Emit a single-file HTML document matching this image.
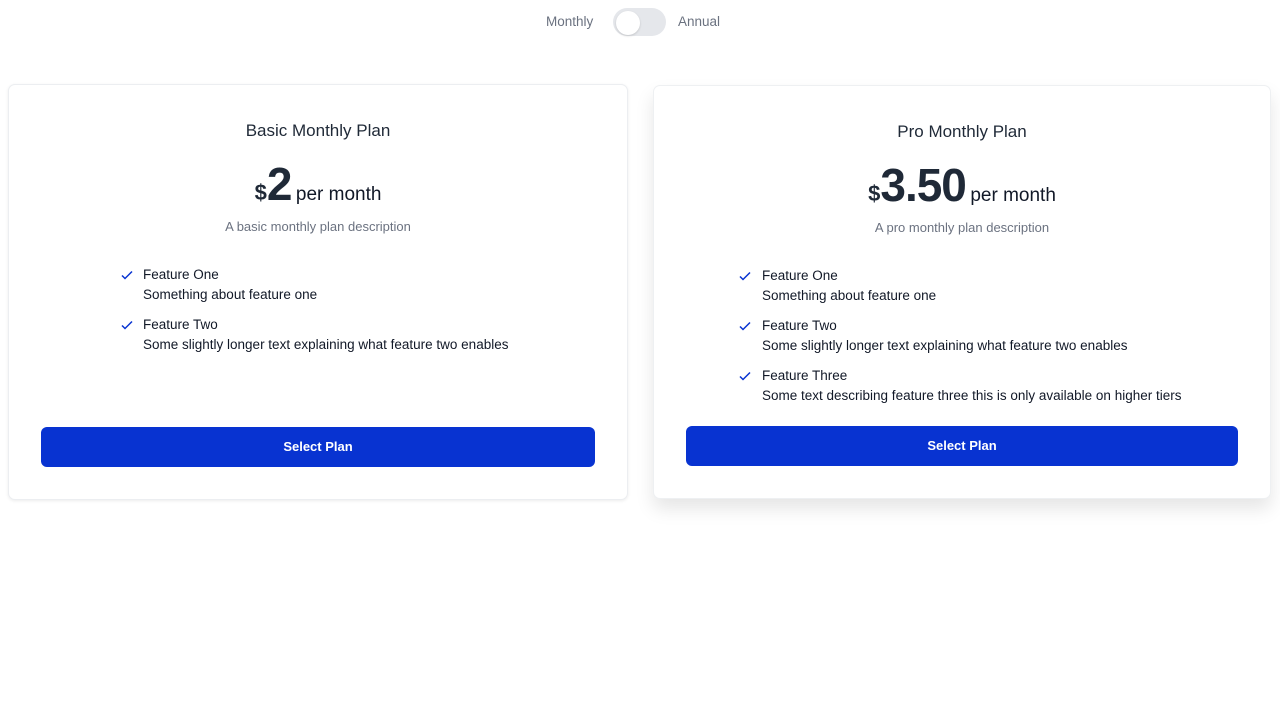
<!DOCTYPE html>
<html><head><style>
*{margin:0;padding:0;box-sizing:border-box}
body{width:1280px;height:720px;background:#fff;font-family:"Liberation Sans",sans-serif;color:#111827;position:relative;overflow:hidden}
.t{position:absolute;white-space:nowrap}
.card{position:absolute;background:#fff;border:1px solid #eceef1;border-radius:7px}
.btn{position:absolute;background:#0833d1;border-radius:6px;color:#fff;font-size:13px;font-weight:bold;text-align:center}
.c{text-align:center}
.feat{font-size:13.5px;line-height:20px}
svg.ck{position:absolute}
</style></head><body>
<div class="t" style="left:546px;top:14px;font-size:13.5px;color:#6b7280">Monthly</div>
<div style="position:absolute;left:613px;top:8px;width:53px;height:28px;border-radius:14px;background:#e5e7eb"></div>
<div style="position:absolute;left:616px;top:11px;width:24px;height:24px;border-radius:12px;background:#fff;box-shadow:0 1px 2px rgba(0,0,0,.15)"></div>
<div class="t" style="left:678px;top:14px;font-size:13.5px;color:#6b7280">Annual</div>

<div class="card" style="left:8px;top:84px;width:620px;height:416px;box-shadow:0 1px 3px rgba(0,0,0,.08)"></div>
<div class="t c" style="left:8px;width:620px;top:121px;font-size:17px;color:#1f2937">Basic Monthly Plan</div>
<div class="t c" style="left:8px;width:620px;top:157px;color:#1f2937"><span style="font-size:22px;font-weight:bold">$</span><span style="font-size:46px;font-weight:bold;letter-spacing:-1px">2</span>&nbsp;<span style="font-size:19px;color:#111827">per month</span></div>
<div class="t c" style="left:8px;width:620px;top:219px;font-size:13px;color:#6b7280">A basic monthly plan description</div>
<svg class="ck" style="left:120px;top:268px" width="14" height="14" viewBox="0 0 14 14"><path d="M2 7.5l3 3 7-7" fill="none" stroke="#0833d1" stroke-width="1.5"/></svg>
<div class="t feat" style="left:143px;top:265px">Feature One<br>Something about feature one</div>
<svg class="ck" style="left:120px;top:318px" width="14" height="14" viewBox="0 0 14 14"><path d="M2 7.5l3 3 7-7" fill="none" stroke="#0833d1" stroke-width="1.5"/></svg>
<div class="t feat" style="left:143px;top:315px">Feature Two<br>Some slightly longer text explaining what feature two enables</div>
<div class="btn" style="left:41px;top:427px;width:554px;height:40px;line-height:40px">Select Plan</div>

<div class="card" style="left:653px;top:85px;width:618px;height:414px;border:1px solid #eef0f2;box-shadow:0 10px 18px rgba(0,0,0,.1)"></div>
<div class="t c" style="left:653px;width:618px;top:122px;font-size:17px;color:#1f2937">Pro Monthly Plan</div>
<div class="t c" style="left:653px;width:618px;top:158px;color:#1f2937"><span style="font-size:22px;font-weight:bold">$</span><span style="font-size:46px;font-weight:bold;letter-spacing:-1px">3.50</span>&nbsp;<span style="font-size:19px;color:#111827">per month</span></div>
<div class="t c" style="left:653px;width:618px;top:220px;font-size:13px;color:#6b7280">A pro monthly plan description</div>
<svg class="ck" style="left:738px;top:269px" width="14" height="14" viewBox="0 0 14 14"><path d="M2 7.5l3 3 7-7" fill="none" stroke="#0833d1" stroke-width="1.5"/></svg>
<div class="t feat" style="left:762px;top:266px">Feature One<br>Something about feature one</div>
<svg class="ck" style="left:738px;top:319px" width="14" height="14" viewBox="0 0 14 14"><path d="M2 7.5l3 3 7-7" fill="none" stroke="#0833d1" stroke-width="1.5"/></svg>
<div class="t feat" style="left:762px;top:316px">Feature Two<br>Some slightly longer text explaining what feature two enables</div>
<svg class="ck" style="left:738px;top:369px" width="14" height="14" viewBox="0 0 14 14"><path d="M2 7.5l3 3 7-7" fill="none" stroke="#0833d1" stroke-width="1.5"/></svg>
<div class="t feat" style="left:762px;top:366px">Feature Three<br>Some text describing feature three this is only available on higher tiers</div>
<div class="btn" style="left:686px;top:426px;width:552px;height:40px;line-height:40px">Select Plan</div>
</body></html>
